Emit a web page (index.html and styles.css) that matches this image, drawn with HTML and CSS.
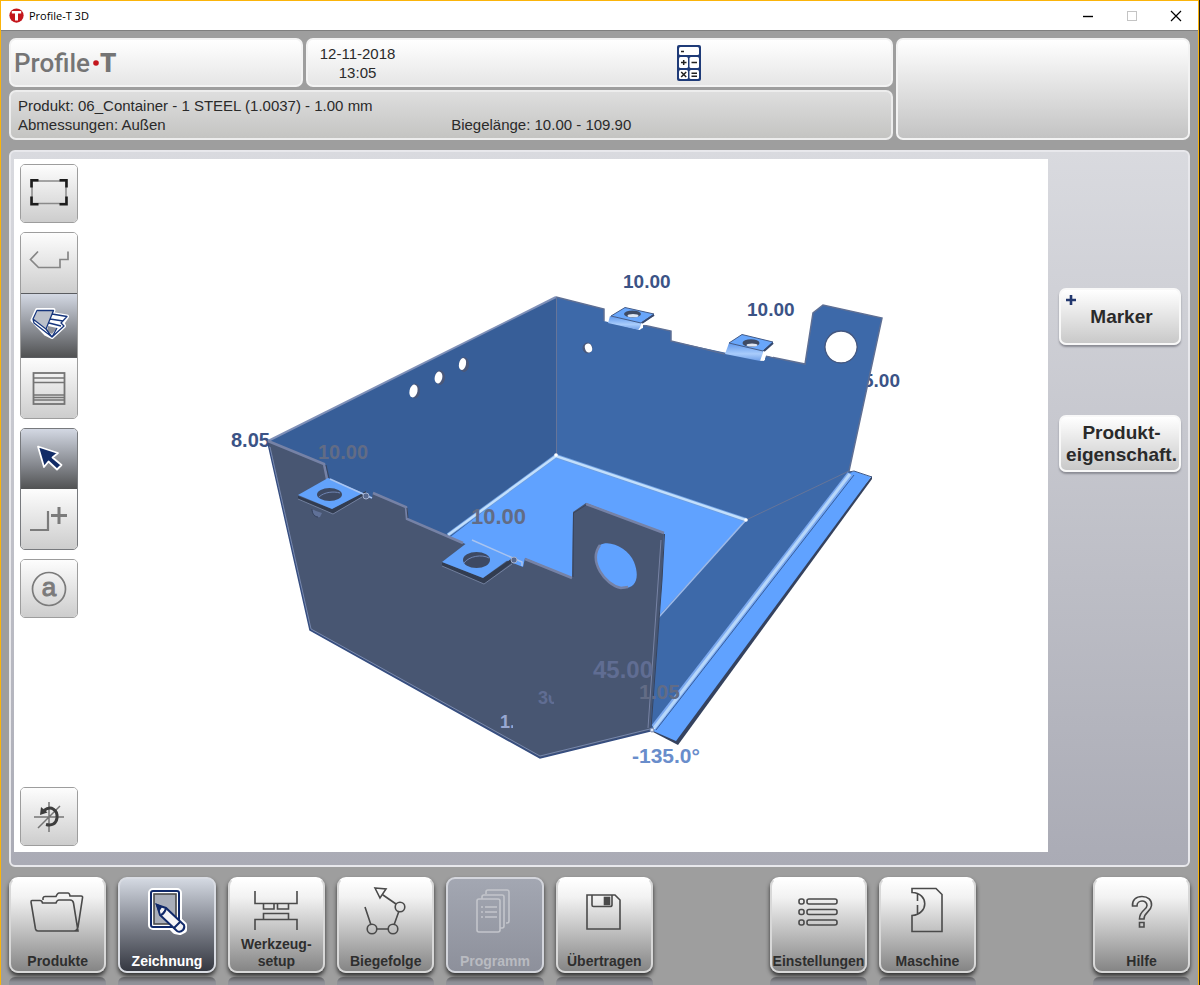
FILE: index.html
```html
<!DOCTYPE html>
<html lang="de">
<head>
<meta charset="utf-8">
<meta name="viewport" content="width=device-width, initial-scale=1">
<title>Profile-T 3D</title>
<link rel="stylesheet" href="styles.css">
</head>
<body>
<div class="window">
  <div class="titlebar">
    <svg class="app-icon" viewBox="0 0 16 16" aria-hidden="true"><circle cx="8" cy="8" r="7.6" fill="#c4161c"/><path d="M3 3.2h10v2.6H9.6v7.4H6.4V5.800H3z" fill="#fff"/></svg>
    <h1 class="app-title">Profile-T 3D</h1>
    <div class="controls">
      <button type="button" class="control" aria-label="Minimieren"><svg viewBox="0 0 12 12"><path d="M1 6.500h10" stroke="#000" stroke-width="1.400"/></svg></button>
      <button type="button" class="control" aria-label="Maximieren" disabled><svg viewBox="0 0 12 12"><rect x="1.500" y="1.500" width="9" height="9" fill="none" stroke="#c4c4c4"/></svg></button>
      <button type="button" class="control" aria-label="Schließen"><svg viewBox="0 0 12 12"><path d="M1 1l10 10M11 1L1 11" stroke="#000" stroke-width="1.200"/></svg></button>
    </div>
  </div>

  <div class="app">
    <header class="header">
      <div class="box brand"><span>Profile</span><svg class="brand-dot" viewBox="0 0 6 6" aria-hidden="true"><circle cx="3" cy="3" r="2.800" fill="#c4161c"/></svg><b>T</b></div>
      <div class="box status">
        <div class="clock"><div>12-11-2018</div><div>13:05</div></div>
        <button type="button" class="calc" aria-label="Rechner">
          <svg viewBox="0 0 24 36"><rect x="0" y="0" width="24" height="36" rx="2" fill="#1f3b78"/><g fill="#fff"><rect x="2" y="2" width="20" height="8" rx="1.500"/><rect x="2" y="12" width="9" height="11" rx="1.500"/><rect x="12.500" y="12" width="9.500" height="11" rx="1.500"/><rect x="2" y="25" width="9" height="9" rx="1.500"/><rect x="12.500" y="25" width="9.500" height="9" rx="1.500"/></g><path d="M4 6.500h3M4 17.500h5.500M6.700 15v5M14.500 17.500h5.500M14.500 28.300h5.500M14.500 31.200h5.500M4.200 27l5 5M9.200 27l-5 5" stroke="#222" stroke-width="1.500" fill="none"/></svg>
        </button>
      </div>
      <div class="box message"></div>
      <div class="box info">
        <div class="info-wide">Produkt: 06_Container - 1 STEEL (1.0037) - 1.00 mm</div>
        <div>Abmessungen: Außen</div>
        <div>Biegelänge: 10.00 - 109.90</div>
      </div>
    </header>

    <main class="panel">
      <div class="canvas">
        <svg class="scene" viewBox="14 159 1034 693" preserveAspectRatio="xMinYMin meet" role="img" aria-label="3D-Ansicht Container">
          <defs>
            <clipPath id="cut3"><path d="M530 685h17v8l7 5v8h-24z"/></clipPath>
            <clipPath id="cut1"><path d="M498 712h15v18h-15z"/></clipPath>
            <linearGradient id="curl" x1="0" y1="0" x2="0" y2="1"><stop offset="0" stop-color="#5e97ec"/><stop offset=".6" stop-color="#a9ccfb"/><stop offset="1" stop-color="#6f9fe8"/></linearGradient>
          </defs>
          <g class="dim dim-dark">
            <text x="623" y="288" font-size="19">10.00</text>
            <text x="747" y="316" font-size="19">10.00</text>
            <text x="863" y="387" font-size="19">5.00</text>
            <text x="231" y="447" font-size="20">8.05</text>
          </g>

          <path fill="#375e98" d="M268 441L556 297V455L440 552L300 520Z"/>
          <path fill="#3d69a9" fill-rule="evenodd" d="M556 297L604 309V321L640 330L643 325L671 331V341L764 361L766 356L805 364L813 313L823 305L882 318L849 471L856 473L652 730L640 720L556 455ZM841 331a16 16 0 1 0 .1 0Z"/>
          <path fill="#60a2ff" d="M556 455L746 520L655 620L560 640L440 545Z"/>
          <path fill="none" stroke="#7f90b8" stroke-width="2" d="M268 441L556 297"/>
          <path fill="none" stroke="#5e6f94" stroke-width="1.500" d="M556 297L604 309V321M643 325L671 331V341L725 354M766 356L805 364L813 313L823 305L882 318L849 471"/>
          <path fill="none" stroke="#667599" d="M556.500 297V455M746 520L849 471"/>
          <path fill="none" stroke="#6f9fe0" stroke-width="4" d="M448 535L556 456L746 520"/>
          <path fill="none" stroke="#c2dffc" stroke-width="2.400" d="M448 535L556 456L746 520"/>
          <path fill="none" stroke="#9cb9e8" stroke-width="1.600" d="M746 520L658 618"/>
          <circle cx="556" cy="455" r="1.800" fill="#fff"/><circle cx="746" cy="520" r="1.800" fill="#fff"/>

          <g stroke="#4a587a"><g fill="#4a587a"><ellipse cx="415" cy="391" rx="4.500" ry="7"/><ellipse cx="440" cy="377.500" rx="4.500" ry="7"/><ellipse cx="464" cy="364.500" rx="4.500" ry="7"/><ellipse cx="587.500" cy="348" rx="4.500" ry="5"/></g></g>
          <g fill="#fff"><ellipse cx="413.500" cy="391" rx="4" ry="6.500" transform="rotate(12 413.500 391)"/><ellipse cx="438.500" cy="377.500" rx="3.800" ry="6" transform="rotate(12 438.500 377.500)"/><ellipse cx="462.500" cy="364" rx="3.500" ry="6" transform="rotate(12 462.500 364)"/><ellipse cx="588.500" cy="348" rx="3.500" ry="4.500" transform="rotate(-20 588.500 348)"/></g>
          <path fill="none" stroke="#44577f" stroke-width="1.300" d="M841 331a16 16 0 1 0 .1 0Z"/>

          <path fill="url(#curl)" d="M610 316L642 322L639 330L608 323Z"/>
          <path fill="#68a6fb" stroke="#435b88" d="M611 316L625 307.500L654 314L641 323Z"/>
          <path fill="none" stroke="#35486e" stroke-width="2" d="M654 315L642 323"/>
          <path fill="#fff" d="M643 324l10-7v7l-10 1zM638 330l5-6v4z"/>
          <ellipse cx="632.500" cy="314" rx="8.500" ry="3.500" fill="#3f4b64"/><ellipse cx="633" cy="315.700" rx="5.500" ry="1.600" fill="#dfe6f2"/>
          <path fill="url(#curl)" d="M729 343L764 350L760 361L725 354Z"/>
          <path fill="#68a6fb" stroke="#435b88" d="M729 343L742 334.500L773 342L763 351Z"/>
          <path fill="none" stroke="#35486e" stroke-width="2" d="M773 343L764 351"/>
          <path fill="#fff" d="M765 352l8-6v11l-8-2zM760 361l5-7v6z"/>
          <ellipse cx="751" cy="343" rx="8.500" ry="3.800" fill="#3f4b64"/><ellipse cx="752" cy="345" rx="5.500" ry="1.600" fill="#dfe6f2"/>

          <path fill="#35425e" d="M653 732L678 745L872 479L872 476Z"/>
          <path fill="#60a2ff" d="M849 474L854 471L871 477L676 741L653 731Z"/>
          <path fill="none" stroke="#7ba8ee" stroke-width="6" d="M850 474L654 727"/>
          <path fill="none" stroke="#b7d7fa" stroke-width="3" d="M850 474L654 728"/>
          <path fill="none" stroke="#3b5e98" d="M854 475L656 730"/>
          <path fill="none" stroke="#435b88" d="M849 472L854 471L872 477"/>

          <path fill="#485672" fill-rule="evenodd" d="M268 441L324 464L328 479L372 499L373 493L406 507L407 519L463 543L523 567L525 558L572 578L573 512L586 503L664 533L662 580L650 731L540 758L310 630ZM600 545C610 539 629 549 634 562C641 580 634 590 621 588C605 585 588 561 600 545Z"/>
          <path fill="none" stroke="#7682a6" stroke-width="2.500" d="M600 545C588 561 605 585 621 588l7-1"/>
          <path fill="none" stroke="#7682a6" stroke-width="2.500" d="M268 441L324 464L327 479M373 493L406 507L407 519L463 543M525 559L572 578M586 504L664 533"/>
          <path fill="none" stroke="#39445c" d="M326 465L329 478M407 508L408 518M573 577L573.500 513L586 505M664.500 534L662 580L651 728"/>
          <path fill="none" stroke="#7783a5" d="M661 540L648 728"/>
          <path fill="none" stroke="#354d80" stroke-width="1.500" d="M268 443L310 630L540 758L650 731"/>
          <path fill="none" stroke="#8394bd" stroke-width=".8" d="M270 447L311 629L540 756L650 729"/>

          <path fill="#323c50" d="M298 496L332 509L366 491V494L333 514L298 499Z"/>
          <path fill="#62a2fb" d="M328 478L363 493L332 509L298 495Z"/>
          <path fill="none" stroke="#a9c4f0" stroke-width="1.500" d="M330 479L372 498"/>
          <path fill="none" stroke="#7e8cab" stroke-width=".8" d="M298 499L333 514L362 497"/>
          <ellipse cx="329.500" cy="494.500" rx="12.500" ry="6.500" fill="#3d4963"/><path d="M319 497c5-5 15-6 21-4" fill="none" stroke="#6f85b3"/>
          <circle cx="366" cy="496" r="3" fill="#58698e" stroke="#a3b0cd"/>
          <path d="M312 509c0 6 4 9 8 8l2-4-6-2z" fill="#607198"/><path d="M312 509c0 5 3 8 6 8" fill="none" stroke="#33405c"/>
          <path fill="#323c50" d="M442 562L483 578L514 557V561L484 584L442 566Z"/>
          <path fill="#62a2fb" d="M472 539L512 557L483 578L442 562Z"/>
          <path fill="none" stroke="#a9c4f0" stroke-width="1.500" d="M472 540L522 562V566"/>
          <path fill="none" stroke="#7e8cab" stroke-width=".8" d="M442 566L484 584L512 564"/>
          <ellipse cx="476.500" cy="560" rx="13.500" ry="8" fill="#3d4963"/><path d="M464 563c5-7 18-9 25-5" fill="none" stroke="#6f85b3"/>
          <circle cx="514" cy="560" r="3" fill="#58698e" stroke="#a3b0cd"/>
          <circle cx="652" cy="730" r="2" fill="#dbe6f6" stroke="#6f7fa5"/>

          <g class="dim dim-grey">
            <text x="318" y="459" font-size="20">10.00</text>
            <text x="471" y="524" font-size="22">10.00</text>
            <text x="639" y="699" font-size="21">1.05</text>
          </g>
          <g class="dim dim-slate">
            <text x="593" y="678" font-size="24">45.00</text>
            <text x="538" y="704" font-size="18" clip-path="url(#cut3)">30</text>
          </g>
          <text class="dim dim-pale" x="500" y="728" font-size="18" clip-path="url(#cut1)">1.</text>
          <text class="dim dim-sky" x="632" y="763" font-size="21">-135.0°</text>
        </svg>

        <div class="tools">
          <div class="tool-group">
            <button type="button" class="tool" aria-label="Einpassen"><svg viewBox="0 0 40 40"><rect x="3" y="7" width="34" height="22.500" fill="none" stroke="#8a8a8a" stroke-width="1.500"/><path d="M2.500 13.500V6.300H9.500M30.500 6.300h7V13.500M37.500 22.500v7.700H30.500M9.500 30.200H2.500V22.500" fill="none" stroke="#1c1c1c" stroke-width="2.600"/></svg></button>
          </div>
          <div class="tool-group">
            <button type="button" class="tool" aria-label="Profilansicht"><svg viewBox="0 0 40 40" fill="none" stroke="#868686" stroke-width="1.700"><path d="M9 8.500L1.500 16.500L9.500 24.500H31V16.500H39V8.500"/></svg></button>
            <button type="button" class="tool active" aria-label="3D-Ansicht" aria-pressed="true"><svg viewBox="0 0 40 40" stroke-linejoin="round"><path d="M8 4H24.500L23 8L38 10.500L33.500 17L35 20L23 31L17 28L3.500 14Z" fill="#fff" stroke="#fff" stroke-width="4"/><path d="M9 4.500H24.500L17 22L4.500 13Z" fill="#bcc1cb"/><path d="M17 23L21 16L32 18L34 20L23 30Z" fill="#fff"/><path d="M19 20L28 22L23 28L18 25Z" fill="#8d9098"/><path d="M8 4.500H24.500L17 23L4 13ZM4 13L5 17L23 31L35 20L32 17L38 10.500L23 8M21 13L34 15M20 17L32 20M17 23L23 31L28 22" fill="none" stroke="#17367d" stroke-width="1.300"/></svg></button>
            <button type="button" class="tool" aria-label="Abwicklung"><svg viewBox="0 0 40 40" fill="none" stroke="#747474"><rect x="4.500" y="5" width="31" height="31" stroke-width="1.800"/><path d="M4 10h32M4 14.500h32M4 27h32M4 29.500h32M4 32h32" stroke-width="1.300"/></svg></button>
          </div>
          <div class="tool-group">
            <button type="button" class="tool active" aria-label="Auswählen" aria-pressed="true"><svg viewBox="0 0 40 40"><path d="M9 7.500L29 14L23.500 18.500L32.500 26L28 30.500L19.500 22.500L15 28Z" fill="#112b66" stroke="#fff" stroke-width="1.800" stroke-linejoin="round"/></svg></button>
            <button type="button" class="tool" aria-label="Schenkel hinzufügen"><svg viewBox="0 0 40 40" fill="none" stroke="#7b7b7b"><path d="M1 31H19V12" stroke-width="2.200"/><path d="M30 8V25M22 16.500H38" stroke-width="3"/></svg></button>
          </div>
          <div class="tool-group">
            <button type="button" class="tool" aria-label="Text"><svg viewBox="0 0 40 40"><circle cx="20" cy="20" r="16.500" fill="none" stroke="#7b7b7b" stroke-width="1.700"/><text class="letter" x="20" y="26.500" text-anchor="middle">a</text></svg></button>
          </div>
          <div class="tool-group last">
            <button type="button" class="tool" aria-label="Drehen"><svg viewBox="0 0 40 40" fill="none"><path d="M20 5V35M5 20H35M9 31L31 9" stroke="#757575" stroke-width="1.500"/><path d="M15 13.500C22 8 29 13 28 21C27 27 23 29 17 27.500" stroke="#3d3d3d" stroke-width="3"/><path d="M11 18L12 10L18.500 15.500Z" fill="#3d3d3d"/></svg></button>
          </div>
        </div>
      </div>

      <aside class="side">
        <button type="button" class="action"><svg class="plus" viewBox="0 0 12 12" aria-hidden="true"><path d="M6 1v10M1 6h10" stroke="#22376e" stroke-width="2.600"/></svg>Marker</button>
        <button type="button" class="action">Produkt-<br>eigenschaft.</button>
      </aside>
    </main>

    <nav class="nav">
      <div class="nav-group six">
        <button type="button" class="nav-btn"><svg viewBox="0 0 60 50"><path d="M4 13.500H12Q14 13.500 14.500 16H28Q29 13 31 13H42Q45 13 45.500 16L50 44H10Q8 44 7.500 42L3 15Q3 13.500 4 13.500ZM15 13V11Q15.500 9.500 17 9.500H28Q29.500 6 31 6H40Q41.500 6 42 9H53Q55 9 54.500 11L50 40Q49 44 46 44"/></svg><span>Produkte</span></button>
        <button type="button" class="nav-btn current" aria-current="page"><svg viewBox="0 0 60 50"><g stroke="#fff" stroke-width="6" fill="none" stroke-linejoin="round"><rect x="14" y="4" width="28" height="36" rx="2"/><path d="M20 18L29 21L47 38V43L43 45L38 44L23 28Z"/></g><rect x="17" y="7" width="22" height="30" fill="#a9aeb9"/><g stroke="#10296a" stroke-width="2"><rect x="14" y="4" width="28" height="36" rx="2" fill="none"/><path d="M20 18L29 21L47 38Q48 41 46 43Q43 46 40 44L23 28Z" fill="#f4f4f6"/><path d="M20 18l4 2-2 3zM29 21Q28 26 24 28M43 35L37 41" fill="#10296a"/></g></svg><span>Zeichnung</span></button>
        <button type="button" class="nav-btn two"><svg viewBox="0 0 60 50"><path d="M9 4V16.500H51V4M17.500 17V22H28V17M31.500 17V22H42.500V17M9 43V32.500H51V43M17.500 32V26.500H42.500V32"/></svg><span>Werkzeug-<br>setup</span></button>
        <button type="button" class="nav-btn"><svg viewBox="0 0 60 50"><circle cx="16" cy="42" r="4.800"/><circle cx="37" cy="42" r="4.800"/><circle cx="44" cy="20" r="4.800"/><path d="M9 20L15 38M21 42H32M43 24L38 38M40 17L27 8M19 1L30 2L24 11Z"/></svg><span>Biegefolge</span></button>
        <button type="button" class="nav-btn off" disabled><svg viewBox="0 0 60 50"><g><path d="M21 7V5Q21 3 23 3H42Q44 3 44 5V34Q44 36 42 36H41M17 12V10Q17 8 19 8H37Q39 8 39 10V39Q39 41 37 41H35"/><rect x="12" y="12" width="23" height="33" rx="2"/><path d="M16 20h2M20 20H32M16 25h2M20 25H32M16 30h2M20 30H32"/></g></svg><span>Programm</span></button>
        <button type="button" class="nav-btn"><svg viewBox="0 0 60 50"><path d="M13 8H41L46 13V42H13ZM18 8V18Q18 19.500 19.500 19.500H36Q38 19.500 38 18V8"/><rect x="30.500" y="10.500" width="5" height="7" fill="#4a4a4a"/></svg><span>Übertragen</span></button>
      </div>
      <div class="nav-group pair">
        <button type="button" class="nav-btn"><svg viewBox="0 0 60 50"><rect x="10" y="12" width="5" height="5" rx="2"/><rect x="10" y="22.500" width="5" height="5" rx="2"/><rect x="10" y="33" width="5" height="5" rx="2"/><rect x="18" y="12" width="30" height="5" rx="2"/><rect x="18" y="22.500" width="30" height="5" rx="2"/><rect x="18" y="33" width="30" height="5" rx="2"/></svg><span>Einstellungen</span></button>
        <button type="button" class="nav-btn"><svg viewBox="0 0 60 50"><path d="M14 1.500H38L44 7.500V44.500H14V28.500C31 27 31 6 14 5.500ZM19.500 7V14M19.500 18V27"/></svg><span>Maschine</span></button>
      </div>
      <div class="nav-group one">
        <button type="button" class="nav-btn"><svg viewBox="0 0 60 50"><path d="M20.500 19C20 13 24 9.500 30 9.500C36 9.500 40 13 39.500 18.500C39 25 32 25 32 32H27.500C27.500 23 35 23 35 18.500C35 12.500 25 12.500 25 19ZM27.500 35.500H32V40H27.500Z"/></svg><span>Hilfe</span></button>
      </div>
    </nav>
  </div>
</div>
</body>
</html>
```
FILE: styles.css
```css
* { box-sizing: border-box; }

body {
  margin: 0;
  padding-right: 1px;
  background: #26231a;
  color: #2a2a2a;
  font: 15px/19px "Liberation Sans", Arial, sans-serif;
}

button {
  margin: 0;
  padding: 0;
  border: 0;
  background: none;
  color: inherit;
  font: inherit;
}

svg { display: block; }

.window {
  display: flex;
  flex-direction: column;
  min-height: 100vh;
  border: 1px solid #fbb40a;
  border-bottom: 0;
  background: #9e9e9e;
}

.titlebar {
  display: flex;
  align-items: center;
  height: 30px;
  padding-left: 8px;
  border-bottom: 1px solid #7f7f7f;
  background: #fff;
}

.app-icon { width: 15px; height: 15px; }

.app-title {
  margin: 0 auto 0 5px;
  color: #000;
  font: 11px/16px "Open Sans", "Noto Sans", sans-serif;
}

.controls { display: flex; }

.control {
  display: grid;
  place-items: center;
  width: 44px;
  height: 28px;
}

.control svg { width: 12px; height: 12px; }

.app {
  display: flex;
  flex: 1;
  flex-direction: column;
  gap: 10px;
  padding: 7px 8px 12px;
}

.header {
  display: grid;
  grid-template-columns: 1fr 2fr 1fr;
  grid-template-rows: 49px 50px;
  gap: 3px;
}

.box {
  border: 2px solid #f3f3f3;
  border-radius: 7px;
  background: linear-gradient(#fff, #e6e6e6);
}

.brand {
  display: flex;
  align-items: center;
  padding-left: 3px;
  color: #757575;
  font: 500 26px/30px Roboto, sans-serif;
}

.brand b { font-weight: 900; }
.brand-dot { width: 6px; height: 6px; margin: 0 1px 0 3px; }

.status {
  display: flex;
  justify-content: space-between;
  align-items: center;
  padding: 0 190px 0 12px;
}

.clock { text-align: center; }
.calc svg { width: 24px; height: 36px; }

.message {
  grid-row: 1 / 3;
  grid-column: 3;
  background: linear-gradient(#fff, #c3c3c3);
}

.info {
  display: grid;
  grid-column: 1 / 3;
  grid-template-columns: 1fr 1fr;
  align-content: center;
  padding: 0 7px;
  border-color: #ededed;
  background: linear-gradient(#dedede, #c4c4c2);
}

.info-wide { grid-column: 1 / 3; }

.panel {
  display: flex;
  flex: 1;
  gap: 11px;
  padding: 7px 7px 13px 3px;
  border: 2px solid #e8e8ec;
  border-radius: 6px;
  background: linear-gradient(#d9dadf, #aaabb5);
}

.canvas {
  display: grid;
  flex: 1;
  background: #fff;
}

.scene,
.tools { grid-area: 1 / 1; }

.scene { width: 100%; height: auto; }

.dim { font-weight: bold; }
.dim-dark { fill: #3b5386; }
.dim-grey { fill: #626c85; }
.dim-slate { fill: #606d93; }
.dim-pale { fill: #98a8d2; }
.dim-sky { fill: #698dcb; }

.tools {
  z-index: 1;
  display: flex;
  flex-direction: column;
  gap: 9px;
  width: 58px;
  margin: 5px 6px 6px;
}

.tool-group {
  overflow: hidden;
  border: 1px solid #9d9d9d;
  border-radius: 5px;
}

.last { margin-top: auto; }

.tool {
  display: grid;
  place-items: center;
  width: 100%;
  height: 57px;
  background: linear-gradient(#fdfdfd, #cdcdcd);
}

.tool:not(:only-child) { height: 60px; }
.tool.active { background: linear-gradient(#d3d8e3, #85888e 60%, #515253); }
.tool.active:not(:first-child) { height: 65px; border: 1px solid #5a5c60; border-width: 1px 0; }
.tool-group:has(.active:first-child) { border-color: #77797d; }
.tool svg { width: 40px; height: 40px; }
.letter { fill: #7b7b7b; stroke: #7b7b7b; font-size: 26px; }

.side {
  display: flex;
  flex-direction: column;
  gap: 70px;
  width: 122px;
  padding-top: 129px;
}

.action {
  position: relative;
  height: 57px;
  padding-left: 3px;
  border: 2px solid #f8f8f8;
  border-radius: 7px;
  background: linear-gradient(#fff, #c9c9c9);
  box-shadow: 0 2px 2px #8b8c94;
  font-size: 19px;
  font-weight: bold;
  line-height: 22px;
}

.plus {
  position: absolute;
  top: 4px;
  left: 4px;
  width: 12px;
  height: 12px;
}

.nav {
  display: flex;
  justify-content: space-between;
}

.nav-group {
  display: grid;
  grid-auto-columns: 1fr;
  grid-auto-flow: column;
  gap: 12px;
}

.six { flex: 0 1 644px; }
.pair { flex: 0 1 206px; }
.one { flex: 0 1 97px; }

.nav-btn {
  position: relative;
  display: flex;
  flex-direction: column;
  justify-content: space-between;
  align-items: center;
  min-width: 0;
  height: 96px;
  padding: 8px 0 1px;
  border: 2px solid #d8d8d8;
  border-top-color: #fff;
  border-radius: 9px;
  background: linear-gradient(#fff, #f2f2f2 20%, #858585);
  box-shadow: 0 3px 4px #333;
  color: #2e2e2e;
  font-size: 14px;
  font-weight: bold;
  line-height: 17px;
}

/* Reflection on the surface under each button */
.nav-btn::after {
  position: absolute;
  top: 98px;
  right: -2px;
  left: -2px;
  height: 10px;
  border-radius: 6px 6px 0 0;
  background: linear-gradient(#5c5c5e, #8d8e95 50%, #97989f);
  content: "";
}

.nav-btn svg {
  width: 60px;
  height: 50px;
  fill: none;
  stroke: #4a4a4a;
  stroke-width: 1.6;
}

.two svg { margin-bottom: -8px; }

.current {
  border-color: #d9dce3;
  background: linear-gradient(#d3d8e1, #81858f 50%, #353841);
  color: #fff;
}

.off {
  border-color: #d3d5dc;
  background: linear-gradient(#a3a7b2, #8d909b);
  color: #b9bbc1;
}

.off svg { stroke: #c3c5cb; }
```
